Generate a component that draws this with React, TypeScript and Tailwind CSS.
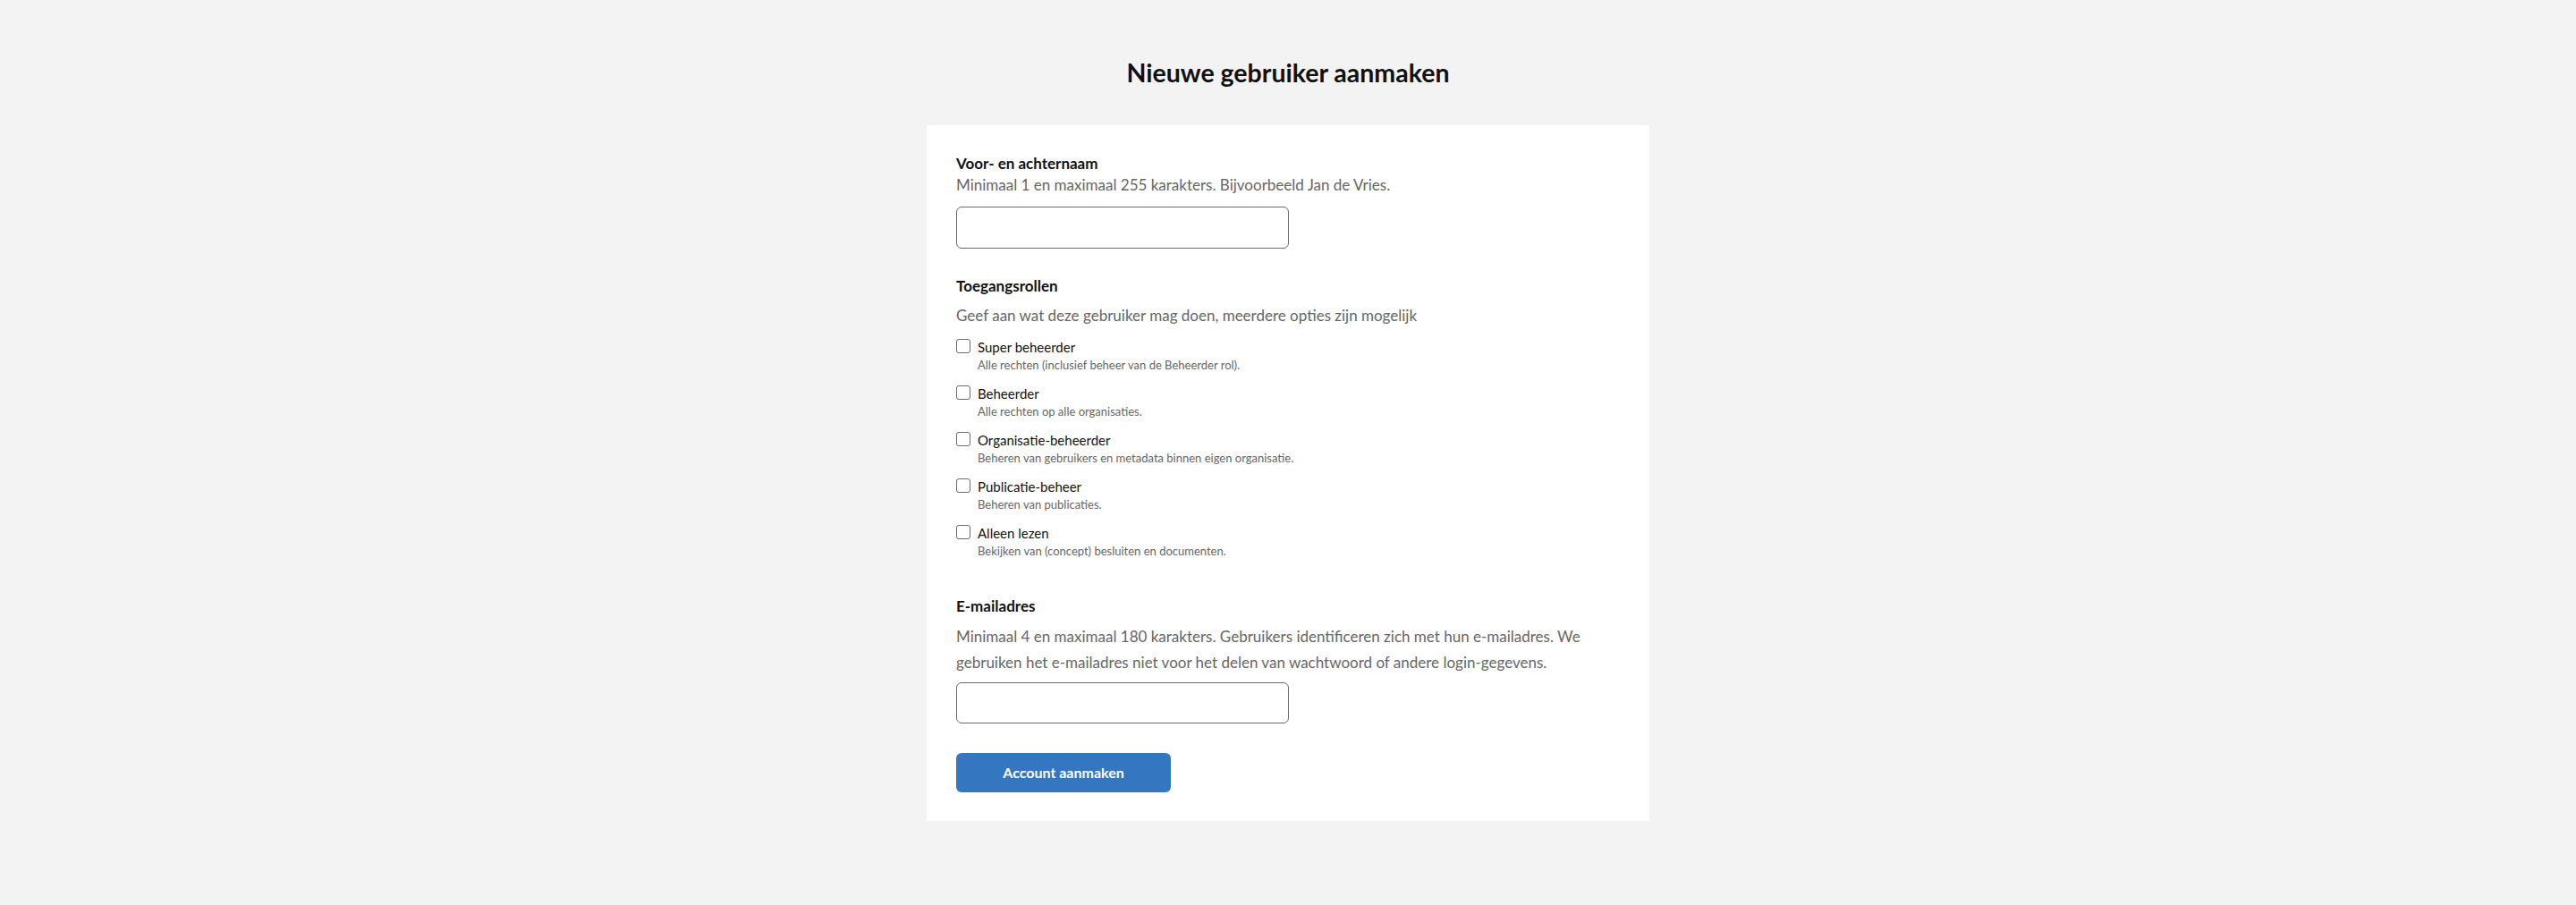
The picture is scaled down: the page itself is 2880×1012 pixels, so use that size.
import React from 'react';

const roles = [
  { name: 'Super beheerder', desc: 'Alle rechten (inclusief beheer van de Beheerder rol).' },
  { name: 'Beheerder', desc: 'Alle rechten op alle organisaties.' },
  { name: 'Organisatie-beheerder', desc: 'Beheren van gebruikers en metadata binnen eigen organisatie.' },
  { name: 'Publicatie-beheer', desc: 'Beheren van publicaties.' },
  { name: 'Alleen lezen', desc: 'Bekijken van (concept) besluiten en documenten.' },
];

export default function App() {
  return (
    <div className="min-h-screen bg-[#f3f3f3] font-['Lato',sans-serif] text-[#111]">
      <div className="flex flex-col items-center pt-[62px]">
        <h1 className="text-[28.5px] leading-[38px] font-bold">Nieuwe gebruiker aanmaken</h1>

        <form className="mt-[40px] w-[808px] bg-white px-[33px] pt-[32px] pb-[32px]">
          {/* naam */}
          <div className="text-[17px] leading-[22px] font-bold">Voor- en achternaam</div>
          <div className="text-[17px] leading-[26px] text-[#666]">
            Minimaal 1 en maximaal 255 karakters. Bijvoorbeeld Jan de Vries.
          </div>
          <input className="mt-[11px] block h-[47px] w-[372px] rounded-[6px] border border-[#6b6b6b] bg-white" />

          {/* rollen */}
          <div className="mt-[31px] text-[17px] leading-[22px] font-bold">Toegangsrollen</div>
          <div className="mt-[9px] text-[17px] leading-[26px] text-[#666]">
            Geef aan wat deze gebruiker mag doen, meerdere opties zijn mogelijk
          </div>
          <div className="mt-[12px] flex flex-col gap-[12px]">
            {roles.map((r) => (
              <label key={r.name} className="flex items-start gap-[8px]">
                <span className="mt-[1px] h-[16px] w-[16px] shrink-0 rounded-[3px] border border-[#6b6b6b] bg-white" />
                <span className="flex flex-col">
                  <span className="text-[15px] leading-[20px]">{r.name}</span>
                  <span className="text-[13px] leading-[20px] text-[#666]">{r.desc}</span>
                </span>
              </label>
            ))}
          </div>

          {/* e-mail */}
          <div className="mt-[41px] text-[17px] leading-[22px] font-bold">E-mailadres</div>
          <div className="mt-[8px] text-[17px] leading-[29px] text-[#666]">
            Minimaal 4 en maximaal 180 karakters. Gebruikers identificeren zich met hun e-mailadres. We gebruiken het e-mailadres niet voor het delen van wachtwoord of andere login-gegevens.
          </div>
          <input className="mt-[8px] block h-[46px] w-[372px] rounded-[6px] border border-[#6b6b6b] bg-white" />

          <button
            type="button"
            className="mt-[33px] block h-[44px] w-[240px] rounded-[6px] bg-[#3477c0] text-[16px] font-bold text-white"
          >
            Account aanmaken
          </button>
        </form>
      </div>
    </div>
  );
}
